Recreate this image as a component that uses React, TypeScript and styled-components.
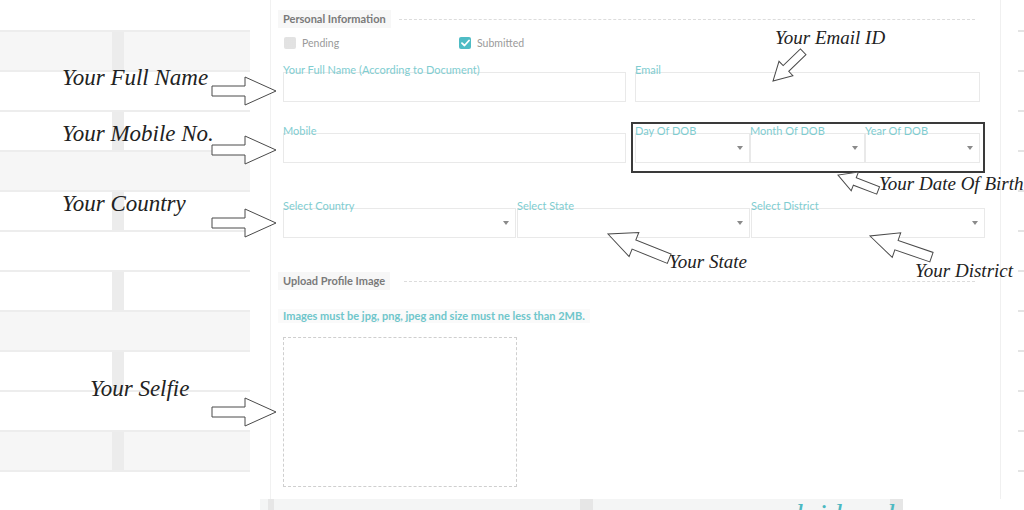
import React from 'react';
import styled, { createGlobalStyle } from 'styled-components';

const Global = createGlobalStyle`
  html, body { margin: 0; padding: 0; background: #fff; }
  body { font-family: Lato, "Open Sans", "Liberation Sans", sans-serif; }
  * { box-sizing: border-box; }
`;

const Stage = styled.div`
  position: relative;
  width: 1024px;
  height: 510px;
  overflow: hidden;
  display: flex;
  flex-direction: column;
  background: #fff;
`;

const Upper = styled.div`
  display: flex;
  height: 499px;
  flex: none;
`;

const Backdrop = styled.div`
  width: 250px;
  flex: none;
  padding-top: 30px;
  display: flex;
  flex-direction: column;
`;

const BackRow = styled.div<{ $shade?: boolean; $stripe?: boolean }>`
  height: 40px;
  flex: none;
  border-top: 2px solid #ededed;
  background-color: ${(p) => (p.$shade ? '#f6f6f6' : '#fff')};
  background-image: ${(p) =>
    p.$stripe
      ? 'linear-gradient(to right, transparent 112px, #ececec 112px, #ececec 124px, transparent 124px)'
      : 'none'};
`;

const Gutter = styled.div`
  width: 20px;
  flex: none;
`;

const Panel = styled.div`
  width: 730px;
  flex: none;
  border-left: 1px solid #f1f1f1;
  padding: 10px 0 0 12px;
  display: flex;
  flex-direction: column;
`;

const RightStrip = styled.div`
  flex: 1;
  border-left: 1px solid #f0f0f0;
  background-image: repeating-linear-gradient(to bottom, #e4e4e4 0 2px, transparent 2px 40px);
  background-size: 6px 100%;
  background-position: right 0 top 30px;
  background-repeat: no-repeat;
`;

const SectionHeader = styled.div<{ $gap: number; $top?: number }>`
  display: flex;
  align-items: center;
  height: 18px;
  margin-top: ${(p) => p.$top ?? 0}px;
  margin-left: -5px;
  margin-right: 25px;
  gap: ${(p) => p.$gap}px;
`;

const SectionTitle = styled.div`
  background: #f7f7f7;
  padding: 0 5px;
  font-size: 11px;
  font-weight: 700;
  line-height: 18px;
  color: #7a7a7a;
  white-space: nowrap;
`;

const DashRule = styled.div`
  flex: 1;
  border-top: 1px dashed #dcdcdc;
`;

const StatusRow = styled.div`
  display: flex;
  margin-top: 9px;
  height: 12px;
`;

const StatusItem = styled.div`
  width: 175px;
  display: flex;
  align-items: center;
  gap: 6px;
  padding-left: 1px;
  font-size: 10.5px;
  color: #9a9a9a;
  line-height: 12px;
`;

const Check = styled.span<{ $on?: boolean }>`
  width: 12px;
  height: 12px;
  border-radius: 2px;
  display: inline-flex;
  align-items: center;
  justify-content: center;
  background-color: ${(p) => (p.$on ? '#4fbcc5' : '#ededed')};
  background-image: ${(p) =>
    p.$on ? 'none' : 'radial-gradient(#d6d6d6 0.6px, transparent 0.8px)'};
  background-size: 2px 2px;
`;

const Grid = styled.div<{ $cols: string; $gap: number; $top: number }>`
  display: grid;
  grid-template-columns: ${(p) => p.$cols};
  column-gap: ${(p) => p.$gap}px;
  margin-top: ${(p) => p.$top}px;
  align-items: start;
`;

const Field = styled.div<{ $offset?: number }>`
  display: flex;
  flex-direction: column;
  margin-top: ${(p) => p.$offset ?? 0}px;
`;

const Label = styled.span`
  position: relative;
  z-index: 1;
  height: 10px;
  margin-bottom: -3px;
  font-size: 11px;
  line-height: 10px;
  color: #7fcdd1;
  white-space: nowrap;
`;

const Box = styled.div`
  height: 30px;
  border: 1px solid #e9e9e9;
  background: #fff;
  display: flex;
  align-items: center;
  justify-content: flex-end;
  padding-right: 6px;
`;

const DobGroup = styled.div`
  border: 2px solid #3a3a3a;
  padding: 2px 3px 8px 2px;
  display: grid;
  grid-template-columns: 115px 115px 115px;
  width: 354px;
`;

const HelpText = styled.div`
  margin-top: 19px;
  margin-left: -5px;
  align-self: flex-start;
  padding: 0 5px;
  background: #fafafa;
  font-size: 11px;
  font-weight: 700;
  line-height: 14px;
  color: #6fc6cb;
`;

const DropZone = styled.div`
  margin-top: 14px;
  width: 234px;
  height: 150px;
  border: 1px dashed #cfcfcf;
`;

const BottomBand = styled.div`
  height: 11px;
  flex: none;
  margin-left: 260px;
  width: 643px;
  padding-left: 535px;
  background-color: #f4f5f5;
  background-image: linear-gradient(to right, transparent 8px, #e6e6e6 8px, #e6e6e6 14px, transparent 14px,
    transparent 320px, #e6e6e6 320px, #e6e6e6 333px, transparent 333px, transparent 630px, #e6e6e6 630px);
`;

const TealScript = styled.span`
  display: block;
  font-family: "Liberation Serif", serif;
  font-style: italic;
  font-size: 30px;
  line-height: 30px;
  color: #4bb8c1;
  white-space: nowrap;
`;

const Callout = styled.span<{ $x: number; $y: number; $size: number }>`
  position: absolute;
  left: ${(p) => p.$x}px;
  top: ${(p) => p.$y}px;
  font-family: "Liberation Serif", "Times New Roman", serif;
  font-style: italic;
  font-size: ${(p) => p.$size}px;
  line-height: ${(p) => p.$size + 1}px;
  color: #222;
  white-space: nowrap;
`;

const ArrowLayer = styled.svg`
  position: absolute;
  left: 0;
  top: 0;
  width: 1024px;
  height: 510px;
  pointer-events: none;
`;

const Caret = () => (
  <svg width="6" height="4" viewBox="0 0 6 4">
    <path d="M0 0 L6 0 L3 4 Z" fill="#8a8a8a" />
  </svg>
);

const Tick = () => (
  <svg width="9" height="8" viewBox="0 0 9 8">
    <path d="M1 4.2 L3.5 6.5 L8 1.5" fill="none" stroke="#fff" strokeWidth="1.8" strokeLinecap="round" strokeLinejoin="round" />
  </svg>
);

type ArrowSpec = { x: number; y: number; a: number; L: number; h: number; w: number; s: number };

const arrowPoints = ({ L, h, w, s }: ArrowSpec) =>
  `${-L},${-s} ${-h},${-s} ${-h},${-w} 0,0 ${-h},${w} ${-h},${s} ${-L},${s}`;

const arrows: ArrowSpec[] = [
  { x: 276, y: 91, a: 0, L: 64, h: 31, w: 14, s: 5 },
  { x: 276, y: 150, a: 0, L: 64, h: 31, w: 14, s: 5 },
  { x: 276, y: 223, a: 0, L: 64, h: 31, w: 14, s: 5 },
  { x: 276, y: 412, a: 0, L: 64, h: 31, w: 14, s: 5 },
  { x: 773, y: 81, a: 136, L: 42, h: 18, w: 10, s: 4 },
  { x: 838, y: 175, a: 201, L: 43, h: 18, w: 10, s: 4 },
  { x: 608, y: 234, a: 202, L: 66, h: 28, w: 13, s: 5 },
  { x: 870, y: 236, a: 199, L: 65, h: 28, w: 13, s: 5 },
];

const callouts = [
  { x: 62, y: 66, t: 'Your Full Name', s: 23 },
  { x: 62, y: 122, t: 'Your Mobile No.', s: 23 },
  { x: 62, y: 192, t: 'Your Country', s: 23 },
  { x: 90, y: 377, t: 'Your Selfie', s: 23 },
  { x: 775, y: 28, t: 'Your Email ID', s: 19 },
  { x: 879, y: 174, t: 'Your Date Of Birth', s: 19 },
  { x: 669, y: 252, t: 'Your State', s: 19 },
  { x: 915, y: 261, t: 'Your District', s: 19 },
];

const backRows = [
  { shade: true, stripe: true },
  { shade: false, stripe: false },
  { shade: false, stripe: true },
  { shade: true, stripe: false },
  { shade: false, stripe: true },
  { shade: false, stripe: false },
  { shade: false, stripe: true },
  { shade: true, stripe: false },
  { shade: false, stripe: true },
  { shade: false, stripe: false },
  { shade: true, stripe: true },
  { shade: false, stripe: false },
];

const SelectField = ({ label }: { label: string }) => (
  <Field>
    <Label>{label}</Label>
    <Box>
      <Caret />
    </Box>
  </Field>
);

export default function App() {
  return (
    <>
      <Global />
      <Stage>
        <Upper>
          <Backdrop>
            {backRows.map((r, i) => (
              <BackRow key={i} $shade={r.shade} $stripe={r.stripe} />
            ))}
          </Backdrop>
          <Gutter />
          <Panel>
            <SectionHeader $gap={8}>
              <SectionTitle>Personal Information</SectionTitle>
              <DashRule />
            </SectionHeader>
            <StatusRow>
              <StatusItem>
                <Check />
                Pending
              </StatusItem>
              <StatusItem>
                <Check $on>
                  <Tick />
                </Check>
                Submitted
              </StatusItem>
            </StatusRow>
            <Grid $cols="343px 345px" $gap={9} $top={16}>
              <Field>
                <Label>Your Full Name (According to Document)</Label>
                <Box />
              </Field>
              <Field>
                <Label>Email</Label>
                <Box />
              </Field>
            </Grid>
            <Grid $cols="343px 354px" $gap={5} $top={20}>
              <Field $offset={4}>
                <Label>Mobile</Label>
                <Box />
              </Field>
              <DobGroup>
                <SelectField label="Day Of DOB" />
                <SelectField label="Month Of DOB" />
                <SelectField label="Year Of DOB" />
              </DobGroup>
            </Grid>
            <Grid $cols="233px 233px 234px" $gap={1} $top={28}>
              <SelectField label="Select Country" />
              <SelectField label="Select State" />
              <SelectField label="Select District" />
            </Grid>
            <SectionHeader $gap={14} $top={34}>
              <SectionTitle>Upload Profile Image</SectionTitle>
              <DashRule />
            </SectionHeader>
            <HelpText>Images must be jpg, png, jpeg and size must ne less than 2MB.</HelpText>
            <DropZone />
          </Panel>
          <RightStrip />
        </Upper>
        <BottomBand>
          <TealScript>laid and</TealScript>
        </BottomBand>
        <ArrowLayer viewBox="0 0 1024 510">
          {arrows.map((a, i) => (
            <polygon
              key={i}
              points={arrowPoints(a)}
              transform={`translate(${a.x} ${a.y}) rotate(${a.a})`}
              fill="#fff"
              stroke="#4a4a4a"
              strokeWidth="1"
              strokeLinejoin="miter"
            />
          ))}
        </ArrowLayer>
        {callouts.map((c) => (
          <Callout key={c.t} $x={c.x} $y={c.y} $size={c.s}>
            {c.t}
          </Callout>
        ))}
      </Stage>
    </>
  );
}
